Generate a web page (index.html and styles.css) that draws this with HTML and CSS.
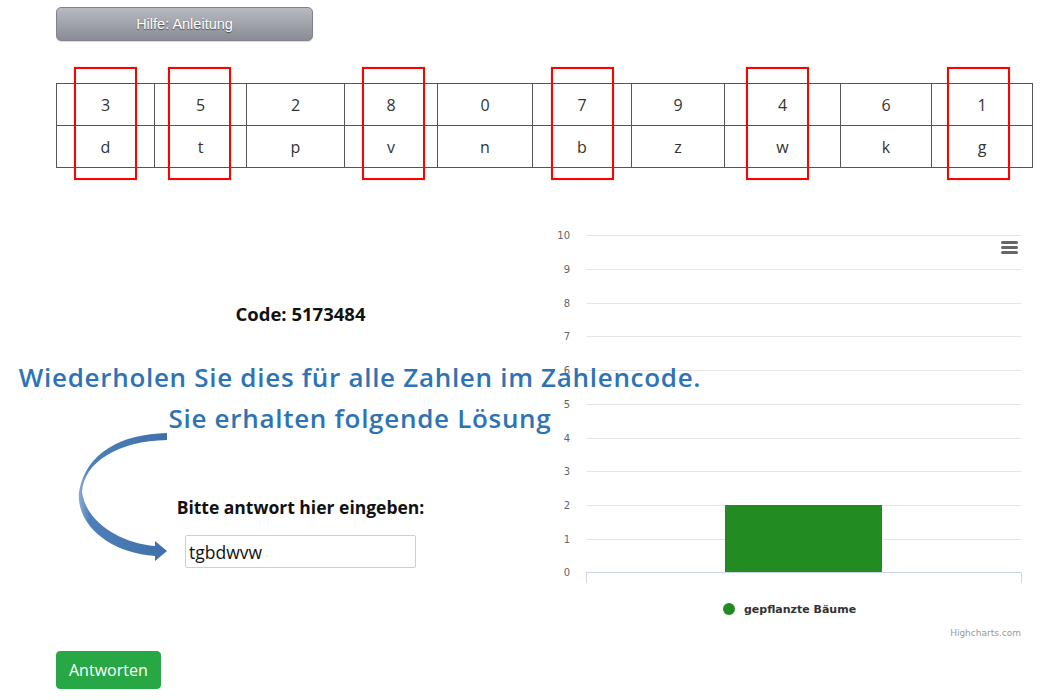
FILE: index.html
```html
<!DOCTYPE html>
<html lang="de">
<head>
<meta charset="utf-8">
<title>Code</title>
<link rel="stylesheet" href="styles.css">
</head>
<body>
<div class="page">
  <button class="help-btn" type="button">Hilfe: Anleitung</button>

  <div class="cipher-wrap">
    <table class="cipher">
      <colgroup>
        <col><col><col><col><col><col><col><col><col><col>
      </colgroup>
      <tr><td>3</td><td>5</td><td>2</td><td>8</td><td>0</td><td>7</td><td>9</td><td>4</td><td>6</td><td>1</td></tr>
      <tr><td>d</td><td>t</td><td>p</td><td>v</td><td>n</td><td>b</td><td>z</td><td>w</td><td>k</td><td>g</td></tr>
    </table>
    <span class="mark m1"></span>
    <span class="mark m2"></span>
    <span class="mark m3"></span>
    <span class="mark m4"></span>
    <span class="mark m5"></span>
    <span class="mark m6"></span>
  </div>

  <div class="main">
    <div class="left">
      <p class="code">Code: 5173484</p>
      <label class="answer-label" for="answer">Bitte antwort hier eingeben:</label>
      <input id="answer" class="answer" type="text" value="tgbdwvw">
    </div>
    <div class="chart">
      <svg class="chart-svg" width="487" height="420" viewBox="0 0 487 420">
        <g class="grid">
          <line x1="41" x2="476" y1="14.5" y2="14.5"/>
          <line x1="41" x2="476" y1="48.5" y2="48.5"/>
          <line x1="41" x2="476" y1="82.5" y2="82.5"/>
          <line x1="41" x2="476" y1="115.5" y2="115.5"/>
          <line x1="41" x2="476" y1="149.5" y2="149.5"/>
          <line x1="41" x2="476" y1="183.5" y2="183.5"/>
          <line x1="41" x2="476" y1="217.5" y2="217.5"/>
          <line x1="41" x2="476" y1="250.5" y2="250.5"/>
          <line x1="41" x2="476" y1="284.5" y2="284.5"/>
          <line x1="41" x2="476" y1="318.5" y2="318.5"/>
        </g>
        <rect class="bar" x="180" y="284" width="157" height="67.5"/>
        <g class="axis">
          <line x1="41" x2="476" y1="351.5" y2="351.5"/>
          <line x1="41.5" x2="41.5" y1="351.5" y2="361.5"/>
          <line x1="476.5" x2="476.5" y1="351.5" y2="361.5"/>
        </g>
        <g class="ylabels">
          <text x="25" y="18">10</text>
          <text x="25" y="52">9</text>
          <text x="25" y="86">8</text>
          <text x="25" y="119">7</text>
          <text x="25" y="153">6</text>
          <text x="25" y="187">5</text>
          <text x="25" y="221">4</text>
          <text x="25" y="254">3</text>
          <text x="25" y="288">2</text>
          <text x="25" y="322">1</text>
          <text x="25" y="355">0</text>
        </g>
        <g class="menu">
          <rect x="456" y="20" width="17" height="3" rx="1.5"/>
          <rect x="456" y="25" width="17" height="3" rx="1.5"/>
          <rect x="456" y="30" width="17" height="3" rx="1.5"/>
        </g>
        <circle class="legend-dot" cx="184" cy="388" r="6"/>
        <text class="legend-text" x="199" y="392">gepflanzte Bäume</text>
        <text class="credits" x="476" y="415">Highcharts.com</text>
      </svg>
    </div>
  </div>

  <button class="submit" type="button">Antworten</button>

  <div class="annot">Wiederholen Sie dies für alle Zahlen im Zahlencode.<br>Sie erhalten folgende Lösung</div>

  <svg class="arrow" width="105" height="145" viewBox="70 425 105 145">
    <defs>
      <linearGradient id="arrowGrad" x1="0" y1="0" x2="1" y2="0">
        <stop offset="0" stop-color="#8aaad2"/>
        <stop offset="0.12" stop-color="#4f7fba"/>
        <stop offset="1" stop-color="#3f70aa"/>
      </linearGradient>
    </defs>
    <path fill="url(#arrowGrad)" d="M167 433 C122 434 86 452 79 492 C76 525 110 553 155 556 L155 561 L167 551 L155 541 L155 546 C120 543 86 522 82 492 C84 462 118 441 167 440 Z"/>
  </svg>
</div>
</body>
</html>
```

FILE: styles.css
```css
* {
  box-sizing: border-box;
}

html,
body {
  margin: 0;
  background: #fff;
}

body {
  font-family: "Open Sans", "Noto Sans", sans-serif;
  color: #212529;
}

.page {
  position: relative;
  height: 700px;
  padding: 7px 10px 0 56px;
  overflow: hidden;
}

.help-btn {
  display: block;
  width: 257px;
  height: 34px;
  padding: 0;
  border: 1px solid #80838b;
  border-radius: 5px;
  background: linear-gradient(#b8bac0, #898c94);
  box-shadow: 0 1px 1px rgba(0, 0, 0, 0.15);
  color: #fff;
  font: 14.5px "Liberation Sans", Arial, sans-serif;
  text-shadow: 0 1px 1px #4a4a4a;
}

.cipher-wrap {
  position: relative;
  width: 976px;
  margin-top: 42px;
}

.cipher {
  width: 976px;
  border-collapse: collapse;
  table-layout: fixed;
}

.cipher col:nth-child(1) { width: 98px; }
.cipher col:nth-child(2) { width: 92px; }
.cipher col:nth-child(3) { width: 98px; }
.cipher col:nth-child(4) { width: 93px; }
.cipher col:nth-child(5) { width: 95px; }
.cipher col:nth-child(6) { width: 99px; }
.cipher col:nth-child(7) { width: 93px; }
.cipher col:nth-child(8) { width: 116px; }
.cipher col:nth-child(9) { width: 91px; }
.cipher col:nth-child(10) { width: 101px; }

.cipher td {
  height: 42px;
  padding: 0;
  border: 1px solid #555;
  color: #333;
  font-size: 16px;
  text-align: center;
  vertical-align: middle;
}

.mark {
  position: absolute;
  top: -16px;
  width: 63px;
  height: 113px;
  border: 2px solid #ff0000;
  box-shadow: 0 0 1px rgba(255, 0, 0, 0.4);
}

.m1 { left: 18px; }
.m2 { left: 112px; }
.m3 { left: 306px; }
.m4 { left: 495px; }
.m5 { left: 690px; }
.m6 { left: 891px; }

.main {
  display: flex;
  margin-top: 53px;
}

.left {
  width: 489px;
  padding-top: 81px;
  text-align: center;
}

.code {
  margin: 0;
  font-size: 18.5px;
  font-weight: 700;
  line-height: 24px;
  color: #111;
}

.answer-label {
  display: block;
  margin-top: 169px;
  font-size: 17.5px;
  font-weight: 700;
  line-height: 24px;
  color: #111;
}

.answer {
  display: block;
  width: 231px;
  height: 33px;
  margin: 16px auto 0;
  padding: 0 3px;
  border: 1px solid #cfcfcf;
  border-radius: 2px;
  font-family: "Open Sans", "Noto Sans", sans-serif;
  font-size: 17.5px;
  color: #111;
}

.chart {
  width: 487px;
}

.chart-svg {
  display: block;
}

.grid line {
  stroke: #e6e6e6;
  stroke-width: 1;
}

.axis line {
  stroke: #ccd6eb;
  stroke-width: 1;
}

.bar {
  fill: #228b22;
}

.ylabels text {
  fill: #666;
  font-family: "DejaVu Sans", sans-serif;
  font-size: 10px;
  text-anchor: end;
}

.menu rect {
  fill: #666;
}

.legend-dot {
  fill: #228b22;
}

.legend-text {
  fill: #333;
  font-family: "DejaVu Sans", sans-serif;
  font-size: 11px;
  font-weight: 700;
}

.credits {
  fill: #999;
  font-family: "DejaVu Sans", sans-serif;
  font-size: 9px;
  text-anchor: end;
}

.submit {
  display: block;
  margin-top: 10px;
  padding: 6px 12px;
  border: 1px solid #28a745;
  border-radius: 4px;
  background: #28a745;
  color: #fff;
  font-family: "Open Sans", "Noto Sans", sans-serif;
  font-size: 16px;
  line-height: 24px;
}

.annot {
  position: absolute;
  top: 357px;
  left: 0;
  width: 720px;
  color: #2e74b5;
  font-size: 26px;
  font-weight: 600;
  letter-spacing: 0.7px;
  line-height: 41px;
  text-align: center;
}

.arrow {
  position: absolute;
  left: 70px;
  top: 425px;
}
```
